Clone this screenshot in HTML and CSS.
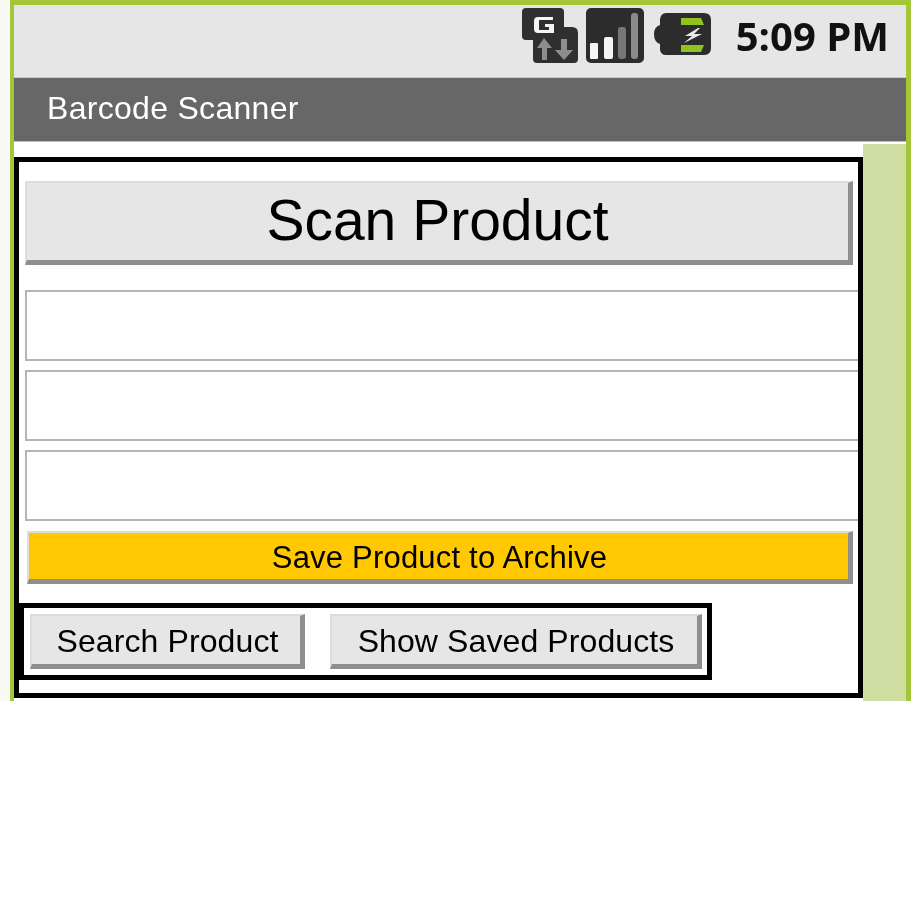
FILE: index.html
```html
<!DOCTYPE html>
<html lang="en">
<head>
    <meta charset="UTF-8">
    <meta name="viewport" content="width=device-width, initial-scale=1.0">
    <title>Barcode Scanner</title>
    <link rel="stylesheet" href="styles.css">
</head>
<body>
    <div class="phone">
        <div class="status_bar">
            <svg class="icon_g" width="56" height="56" viewBox="0 0 56 56">
                <path d="M4 0H38Q42 0 42 4V19H50Q56 19 56 25V51Q56 55 52 55H15Q11 55 11 51V32H4Q0 32 0 28V4Q0 0 4 0Z" fill="#2f2f2f"/>
                <path d="M31 9H16Q12 9 12 13V21Q12 25 16 25H32V16H23V19H27V22H17V12H31Z" fill="#f4f4f4"/>
                <path d="M22 30L15 40H20V52H25V40H30Z" fill="#8d8d8d"/>
                <path d="M42 52L51 42H45V31H39V42H33Z" fill="#8d8d8d"/>
            </svg>
            <svg class="icon_signal" width="58" height="56" viewBox="0 0 58 56">
                <rect width="58" height="55" rx="5" fill="#2c2c2c"/>
                <rect x="4" y="35" width="8" height="16" rx="1" fill="#f4f4f4"/>
                <rect x="18" y="29" width="9" height="22" rx="2" fill="#f4f4f4"/>
                <rect x="32" y="19" width="8" height="32" rx="3" fill="#777"/>
                <rect x="45" y="5" width="7" height="46" rx="3" fill="#8a8a8a"/>
            </svg>
            <svg class="icon_battery" width="58" height="44" viewBox="0 0 58 44">
                <path d="M12 0H50Q57 0 57 7V35Q57 42 50 42H12Q7 42 6 37V31Q0 29 0 21Q0 14 6 12V6Q7 0 12 0Z" fill="#2c2c2c"/>
                <path d="M27 5H47L50 12H27ZM27 32H50L47 39H27Z" fill="#8fc31f"/>
                <path d="M44 15L31 23H38L30 30L48 21H40L46 15Z" fill="#e8e8e8"/>
            </svg>
            <span class="clock">5:09 PM</span>
        </div>
        <div class="title_bar">Barcode Scanner</div>
        <div class="screen">
            <div class="form">
                <div class="box">
                    <button class="btn btn_scan">Scan Product</button>
                    <input class="field" type="text">
                    <input class="field" type="text">
                    <input class="field" type="text">
                    <button class="btn btn_save">Save Product to Archive</button>
                    <div class="box_row">
                        <button class="btn btn_small btn_search">Search Product</button>
                        <button class="btn btn_small btn_show">Show Saved Products</button>
                    </div>
                </div>
            </div>
        </div>
    </div>
</body>
</html>
```

FILE: styles.css
```css
html, body {
    margin: 0;
    padding: 0;
    background: white;
    font-family: "Liberation Sans", Arial, sans-serif;
}
.phone {
    box-sizing: border-box;
    width: 901px;
    height: 701px;
    margin-left: 10px;
    border-top: 5px solid #a4c639;
    border-left: 4px solid #a4c639;
    border-right: 5px solid #a4c639;
    display: flex;
    flex-direction: column;
    box-shadow: -10px 0 0 #f9faf5;
    filter: blur(0.6px);
}
.status_bar {
    height: 73px;
    box-sizing: border-box;
    background: #e6e6e6;
    display: flex;
    align-items: flex-start;
    justify-content: flex-end;
    border-bottom: 1px solid #c8c8c8;
    padding: 3px 17px 0 0;
}
.icon_signal {
    margin-left: 8px;
}
.icon_battery {
    margin-left: 10px;
    margin-top: 5px;
}
.clock {
    margin-left: 24px;
    margin-top: 1px;
    font-family: "Open Sans", sans-serif;
    font-weight: bold;
    font-size: 40px;
    line-height: 54px;
    color: #111;
}
.title_bar {
    height: 64px;
    box-sizing: border-box;
    background: #676767;
    border-bottom: 1px solid #bbb;
    color: white;
    font-size: 32px;
    letter-spacing: 0.3px;
    line-height: 60px;
    padding-left: 33px;
}
.screen {
    flex: 1;
    background: #cfdea3;
    border-top: 2px solid white;
}
.form {
    width: 849px;
    height: 100%;
    box-sizing: border-box;
    background: white;
    padding-top: 13px;
}
.box {
    box-sizing: border-box;
    height: 541px;
    border: 5px solid black;
    padding: 19px 0 0 6px;
    display: flex;
    flex-direction: column;
    align-items: flex-start;
}
.btn {
    box-sizing: border-box;
    padding: 0;
    background: #e6e6e6;
    border-style: solid;
    border-width: 2px 5px 5px 2px;
    border-color: #dcdcdc #8e8e8e #8e8e8e #dcdcdc;
    color: black;
    font-family: "Liberation Sans", Arial, sans-serif;
}
.btn_scan {
    width: 828px;
    height: 84px;
    padding-bottom: 4px;
    font-size: 57px;
}
.field {
    box-sizing: border-box;
    width: 833px;
    height: 71px;
    margin: 0 0 9px;
    padding: 0;
    background: white;
    border: 2px solid #b5b5b5;
    border-right: none;
}
.btn_scan + .field {
    margin-top: 25px;
}
.btn_save {
    width: 826px;
    height: 53px;
    margin: 1px 0 19px 2px;
    padding: 3px 0 0 2px;
    background: #ffc800;
    font-size: 31px;
    letter-spacing: 0.2px;
}
.box_row {
    box-sizing: border-box;
    width: 693px;
    height: 77px;
    margin-left: -6px;
    border: 5px solid black;
    padding: 6px 0 0 6px;
    display: flex;
    gap: 25px;
}
.btn_small {
    height: 55px;
    padding: 3px 0 0 3px;
    font-size: 32px;
    letter-spacing: 0.1px;
}
.btn_search {
    width: 275px;
}
.btn_show {
    width: 372px;
}
```
